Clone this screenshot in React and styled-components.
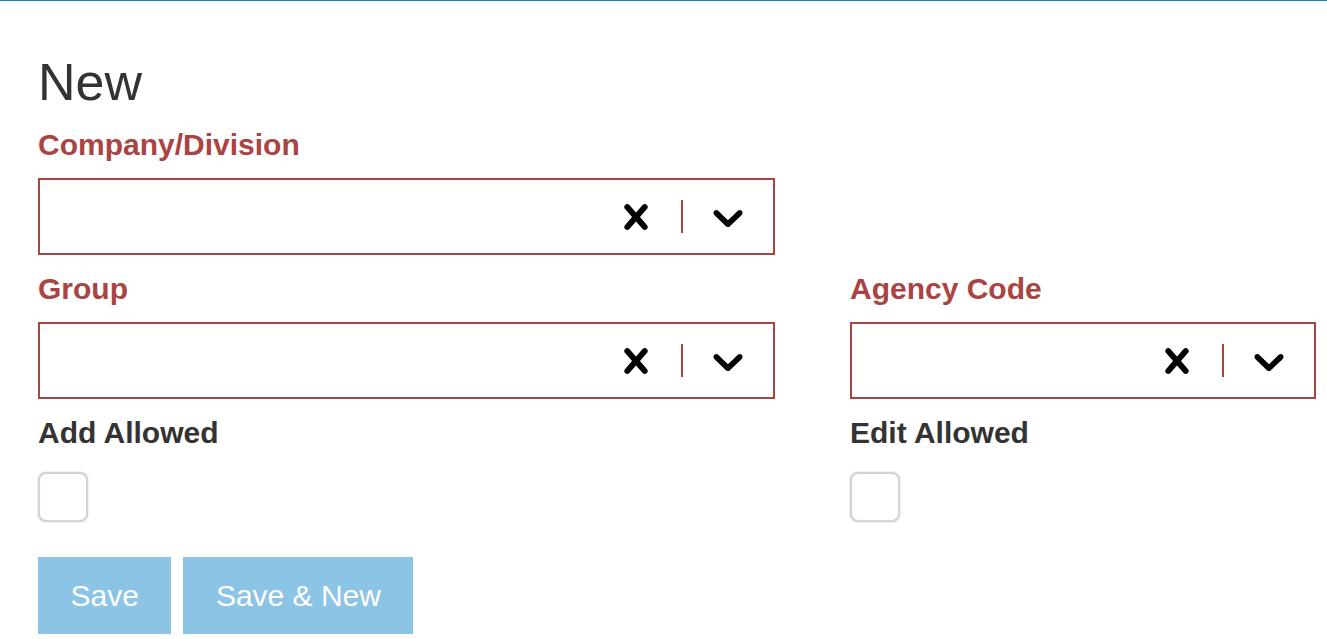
import React from 'react';
import styled, { createGlobalStyle } from 'styled-components';

const GlobalStyle = createGlobalStyle`
  html, body {
    margin: 0;
    padding: 0;
    background: #fff;
  }
  body {
    font-family: "Liberation Sans", Arial, Helvetica, sans-serif;
    color: #333;
  }
`;

const errorRed = '#a94442';

const Page = styled.div`
  border-top: 1px solid #1c7cbf;
  padding: 54px 0 0 38px;
  min-height: 638px;
  box-sizing: border-box;
`;

const Title = styled.h1`
  margin: 0 0 19px;
  font-size: 52px;
  line-height: 54px;
  font-weight: normal;
  color: #333;
`;

const FormGrid = styled.div`
  display: grid;
  grid-template-columns: 737px 466px;
  column-gap: 75px;
`;

const FormGroup = styled.div`
  display: flex;
  flex-direction: column;
  margin-bottom: 17px;
  grid-column: ${p => p.col || 'auto'};
`;

const Label = styled.label`
  display: block;
  font-size: 30px;
  line-height: 34px;
  font-weight: bold;
  margin-bottom: 16px;
  color: ${p => (p.error ? errorRed : '#333')};
`;

const Control = styled.div`
  display: flex;
  align-items: stretch;
  height: 77px;
  box-sizing: border-box;
  border: 2px solid ${errorRed};
  background: #fff;
`;

const ValueArea = styled.div`
  flex: 1;
`;

const Indicators = styled.div`
  display: flex;
  align-items: stretch;
`;

const IndicatorBox = styled.div`
  display: flex;
  align-items: center;
  padding: 0 20px;
  color: #000;
  svg {
    display: block;
    width: 50px;
    height: 50px;
  }
`;

const Separator = styled.span`
  width: 2px;
  margin: 20px 0;
  background: ${errorRed};
`;

const CheckBox = styled.input.attrs({ type: 'checkbox' })`
  appearance: none;
  width: 50px;
  height: 50px;
  margin: 6px 0 0;
  box-sizing: border-box;
  border: 2px solid #d4d4d4;
  border-radius: 8px;
  box-shadow: 0 0 2px rgba(0, 0, 0, 0.2), inset 0 0 1px rgba(0, 0, 0, 0.1);
  background: #fff;
`;

const ButtonRow = styled.div`
  display: flex;
  gap: 12px;
  margin-top: 18px;
`;

const Button = styled.button`
  height: 77px;
  padding: 0 32.5px;
  border: none;
  background: #8cc4e5;
  color: #fff;
  font-family: inherit;
  font-size: 30px;
  cursor: not-allowed;
`;

const CrossIcon = () =>
    <svg viewBox="0 0 20 20" aria-hidden="true">
        <path fill="currentColor"
              d="M14.348 14.849c-0.469 0.469-1.229 0.469-1.697 0l-2.651-3.030-2.651 3.029c-0.469 0.469-1.229 0.469-1.697 0-0.469-0.469-0.469-1.229 0-1.697l2.758-3.15-2.759-3.152c-0.469-0.469-0.469-1.228 0-1.697s1.228-0.469 1.697 0l2.652 3.031 2.651-3.031c0.469-0.469 1.228-0.469 1.697 0s0.469 1.229 0 1.697l-2.758 3.152 2.758 3.15c0.469 0.469 0.469 1.229 0 1.698z" />
    </svg>;

const ChevronIcon = () =>
    <svg viewBox="0 0 20 20" aria-hidden="true">
        <path fill="currentColor"
              d="M4.516 7.548c0.436-0.446 1.043-0.481 1.576 0l3.908 3.747 3.908-3.747c0.533-0.481 1.141-0.446 1.574 0 0.436 0.445 0.408 1.197 0 1.615-0.406 0.418-4.695 4.502-4.695 4.502-0.217 0.223-0.502 0.335-0.787 0.335s-0.57-0.112-0.789-0.335c0 0-4.287-4.084-4.695-4.502s-0.436-1.17 0-1.615z" />
    </svg>;

// An empty select box with the clear and dropdown indicators
const SelectBox = () =>
    <Control>
        <ValueArea />
        <Indicators>
            <IndicatorBox><CrossIcon /></IndicatorBox>
            <Separator />
            <IndicatorBox><ChevronIcon /></IndicatorBox>
        </Indicators>
    </Control>;

const SelectField = props => {
    const {label, col} = props;
    return <FormGroup col={col}>
               <Label error>{label}</Label>
               <SelectBox />
           </FormGroup>;
};

const CheckField = props => {
    const {label, col} = props;
    return <FormGroup col={col}>
               <Label>{label}</Label>
               <CheckBox />
           </FormGroup>;
};

export default function App() {
    return <>
        <GlobalStyle />
        <Page>
            <Title>New</Title>
            <FormGrid>
                <SelectField label="Company/Division" col="1" />
                <SelectField label="Group" col="1" />
                <SelectField label="Agency Code" col="2" />
                <CheckField label="Add Allowed" col="1" />
                <CheckField label="Edit Allowed" col="2" />
            </FormGrid>
            <ButtonRow>
                <Button disabled>Save</Button>
                <Button disabled>Save &amp; New</Button>
            </ButtonRow>
        </Page>
    </>;
}
